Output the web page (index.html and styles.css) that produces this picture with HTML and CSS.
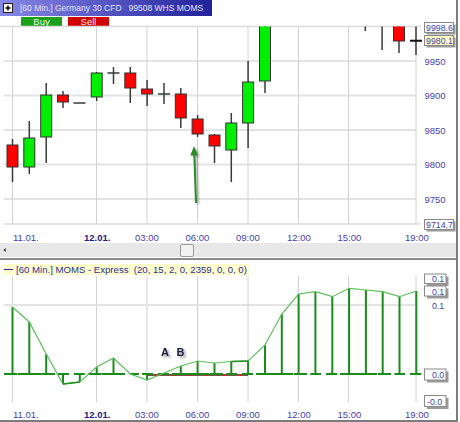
FILE: index.html
```html
<!DOCTYPE html>
<html>
<head>
<meta charset="utf-8">
<link rel="stylesheet" href="styles.css">
</head>
<body>
<div class="window">
  <div class="titlebar">
    <svg class="tb-icon" width="10" height="10" viewBox="0 0 10 10"><rect x="0.5" y="0.5" width="9" height="9" fill="#fff" stroke="#222"/><path d="M2.5 5H7.5M5 2.5V7.5" stroke="#000" stroke-width="1.4"/></svg>
    <span class="tb-text">[60 Min.] Germany 30 CFD</span>
    <span class="tb-text tb-code">99508 WHS MOMS</span>
  </div>
  <div class="toolbar">
    <span class="btn buy">Buy</span>
    <span class="btn sell">Sell</span>
  </div>
  <svg class="chart price" width="456" height="217" viewBox="0 26 456 217">
    <defs>
      <clipPath id="plotclip"><rect x="0" y="26.5" width="423" height="198"/></clipPath>
      <filter id="sh" x="-50%" y="-50%" width="200%" height="200%"><feDropShadow dx="2" dy="1.5" stdDeviation="1.2" flood-color="#000" flood-opacity="0.35"/></filter>
    </defs>
    <g class="grid-h">
      <path d="M4 61H416M4 95.5H416M4 130H416M4 164.5H416M4 199H416"/>
    </g>
    <g class="grid-v">
      <path d="M12.5 26.5V224M96.5 26.5V224M147 26.5V224M197.5 26.5V224M248 26.5V224M298.5 26.5V224M348.5 26.5V224M416 26.5V224"/>
    </g>
    <path class="frame" d="M0 26.5H421M4 224H421"/>
    <g clip-path="url(#plotclip)">
      <g class="wick">
        <path d="M12.5 139V182M29.3 121V174M46.2 83V163M63 91V108M73.5 103H85.5M96.7 72V101M107.5 73H119.5M113.5 67V84M130.3 67V103M147.1 80V106M158 94H170M164 83V104M180.8 88V128M197.6 115V137M214.5 134V163M231.3 113V182M248.1 61V148M265 20V93M365.3 20V31M382.1 20V50M399 20V53M416 20V55"/>
      </g>
      <path class="cross" d="M410 40.7H422"/>
      <g class="body up">
        <rect x="23.8" y="138" width="11" height="29"/>
        <rect x="40.7" y="95" width="11" height="42"/>
        <rect x="91.2" y="73" width="11" height="24"/>
        <rect x="225.8" y="123" width="11" height="27"/>
        <rect x="242.6" y="82" width="11" height="41"/>
        <rect x="259.5" y="20" width="11" height="61"/>
      </g>
      <g class="body down">
        <rect x="7" y="145" width="11" height="22"/>
        <rect x="57.5" y="95" width="11" height="7"/>
        <rect x="124.8" y="73" width="11" height="15"/>
        <rect x="141.6" y="89" width="11" height="5"/>
        <rect x="175.3" y="94" width="11" height="24"/>
        <rect x="192.1" y="119" width="11" height="15"/>
        <rect x="209" y="135" width="11" height="11"/>
        <rect x="393.5" y="20" width="11" height="21"/>
      </g>
    </g>
    <g class="arrow" filter="url(#sh)">
      <path d="M196 203L194.3 153" stroke="#2b8a2b" stroke-width="2"/>
      <path d="M190.3 155.5L194 146L198 155.5Z" fill="#2b8a2b"/>
    </g>
    <g class="ylab">
      <text x="424.5" y="64.5">9950</text>
      <text x="424.5" y="99">9900</text>
      <text x="424.5" y="133.5">9850</text>
      <text x="424.5" y="168">9800</text>
      <text x="424.5" y="202.5">9750</text>
    </g>
    <g class="tag">
      <rect class="tag-sh" x="426.5" y="24.5" width="29" height="10"/>
      <rect class="tag-bg" x="424.5" y="22.5" width="29" height="10"/>
      <text x="426" y="31">9998.6</text>
      <rect class="tag-sh" x="426.5" y="37.5" width="29" height="10"/>
      <rect class="tag-bg yellow" x="424.5" y="35.5" width="29" height="10"/>
      <text x="426" y="44">9980.1</text>
      <rect class="tag-sh" x="426.5" y="221.5" width="29" height="10"/>
      <rect class="tag-bg" x="424.5" y="219.5" width="29" height="10"/>
      <text x="426" y="228">9714.7</text>
    </g>
    <g class="xlab">
      <text x="13" y="240.5">11.01.</text>
      <text class="bold" x="84" y="240.5">12.01.</text>
      <text x="135" y="240.5">03:00</text>
      <text x="185.5" y="240.5">06:00</text>
      <text x="236" y="240.5">09:00</text>
      <text x="287" y="240.5">12:00</text>
      <text x="337.5" y="240.5">15:00</text>
      <text x="405" y="240.5">19:00</text>
    </g>
  </svg>
  <div class="scrollbar">
    <span class="sb-arrow"></span>
    <span class="sb-thumb"></span>
  </div>
  <div class="separator"></div>
  <div class="ind-header">
    <span class="legend"><span class="legend-line"></span>[60 Min.] MOMS - Express &nbsp;(20, 15, 2, 0, 2359, 0, 0, 0)</span>
  </div>
  <svg class="chart ind" width="456" height="144" viewBox="0 276 456 144">
    <defs>
      <filter id="tsh" x="-50%" y="-50%" width="200%" height="200%"><feDropShadow dx="2" dy="2" stdDeviation="1.3" flood-color="#000" flood-opacity="0.4"/></filter>
    </defs>
    <g class="grid-v">
      <path d="M12.5 276V402M96.5 276V402M147 276V402M197.5 276V402M248 276V402M298.5 276V402M348.5 276V402M416 276V402"/>
    </g>
    <g class="grid-h"><path d="M4 305H416"/></g>
    <path class="redbase" d="M147 375H248"/>
    <g class="reddots"><path d="M155 375H157M172 375H174M189 375H191M206 375H208M223 375H225M240 375H242"/></g>
    <path class="zero" d="M4 374H420"/>
    <g class="bars">
      <path d="M12.5 374V307M29.3 374V322M46.2 374V354M63 374V384M79.8 374V382M96.7 374V367M113.5 374V358M147.1 374V380M164 374V373M180.8 374V366M197.6 374V361M214.5 374V363M231.3 374V361.5M248.1 374V361M265 374V345M281.8 374V314M298.6 374V294M315.4 374V291.7M332.3 374V296.7M349.1 374V288.3M365.9 374V290M382.7 374V291.7M399.5 374V296.7M416.3 374V291"/>
    </g>
    <g class="ticks">
      <path d="M7.5 374H17.5M24.3 374H34.3M41.2 374H51.2M58 374H68M74.8 374H84.8M91.7 374H101.7M108.5 374H118.5M142.1 374H152.1M159 374H169M175.8 374H185.8M192.6 374H202.6M209.5 374H219.5M226.3 374H236.3M243.1 374H253.1M260 374H270M276.8 374H286.8M293.6 374H303.6M310.4 374H320.4M327.3 374H337.3M344.1 374H354.1M360.9 374H370.9M377.7 374H387.7M394.5 374H404.5M411.3 374H421.3"/>
    </g>
    <polyline class="mline" points="12.5,307 29.3,322 46.2,354 63,384 79.8,382 96.7,367 113.5,358 130.3,374 147.1,380 164,373 180.8,366 197.6,361 214.5,363 231.3,361.5 248.1,361 265,345 281.8,314 298.6,294 315.4,291.7 332.3,296.7 349.1,288.3 365.9,290 382.7,291.7 399.5,296.7 416.3,291"/>
    <path class="mdark" d="M63 384L79.8 382M231.3 361.5L248.1 361"/>
    <g class="ab" filter="url(#tsh)">
      <text x="161" y="355.7">A</text>
      <text x="176.5" y="355.7">B</text>
    </g>
    <g class="tag">
      <rect class="tag-sh" x="427" y="276.5" width="21.5" height="9.5"/>
      <rect class="tag-bg" x="424.5" y="274" width="21.5" height="9.5"/>
      <text x="432" y="282">0.1</text>
      <rect class="tag-sh" x="427" y="288.5" width="21.5" height="10"/>
      <rect class="tag-bg" x="424.5" y="286" width="21.5" height="10"/>
      <text x="432" y="294.5">0.1</text>
      <text x="432" y="308.5">0.1</text>
      <rect class="tag-sh" x="427" y="371.5" width="21.5" height="11"/>
      <rect class="tag-bg" x="424.5" y="369" width="21.5" height="11"/>
      <text x="432" y="378">0.0</text>
      <rect class="tag-sh" x="427" y="398" width="21.5" height="11"/>
      <rect class="tag-bg" x="424.5" y="395.5" width="21.5" height="11"/>
      <text x="427" y="404.5">-0.0</text>
    </g>
    <g class="xlab">
      <text x="13" y="417.5">11.01.</text>
      <text class="bold" x="84" y="417.5">12.01.</text>
      <text x="135" y="417.5">03:00</text>
      <text x="185.5" y="417.5">06:00</text>
      <text x="236" y="417.5">09:00</text>
      <text x="287" y="417.5">12:00</text>
      <text x="337.5" y="417.5">15:00</text>
      <text x="405" y="417.5">19:00</text>
    </g>
  </svg>
</div>
</body>
</html>
```
FILE: styles.css
```css
html, body {
  margin: 0;
  padding: 0;
  background: #ffffff;
}
body {
  width: 460px;
  height: 422px;
  overflow: hidden;
  font-family: "Liberation Sans", Arial, sans-serif;
}
.window {
  width: 456px;
  height: 420px;
  border-right: 2px solid #7c7c7c;
  border-bottom: 2px solid #7c7c7c;
  background: #ffffff;
  display: flex;
  flex-direction: column;
}
.titlebar {
  align-self: flex-start;
  min-width: 212px;
  height: 16px;
  box-sizing: border-box;
  padding: 0 1px 0 3px;
  display: flex;
  align-items: center;
  gap: 7px;
  background: linear-gradient(to right, #8787e6 0%, #5b5bc8 45%, #22229a 100%);
  flex: none;
}
.tb-icon {
  display: block;
  flex: none;
}
.tb-text {
  color: #e4e4ff;
  font-size: 8.5px;
  white-space: nowrap;
}
.tb-code {
  margin-left: 0;
}
.toolbar {
  height: 10px;
  box-sizing: border-box;
  padding: 1px 0 0 21px;
  display: flex;
  gap: 6px;
  flex: none;
}
.btn {
  width: 41px;
  height: 9px;
  display: flex;
  align-items: center;
  justify-content: center;
  font-size: 9.5px;
  line-height: 9px;
}
.buy {
  background: #1aa01a;
  color: #e6ffe6;
}
.sell {
  background: #d00000;
  color: #ffe6e6;
}
.chart {
  display: block;
  flex: none;
  overflow: visible;
}
.grid-h path {
  stroke: #e3e3e3;
  stroke-width: 2;
  fill: none;
}
.grid-v path {
  stroke: #d2d2d2;
  stroke-width: 1;
  fill: none;
}
.frame {
  stroke: #dcdcdc;
  stroke-width: 1.5;
  fill: none;
}
.wick path {
  stroke: #3a3a3a;
  stroke-width: 1.5;
  fill: none;
}
.cross {
  stroke: #111;
  stroke-width: 2;
}
.body rect {
  stroke: #333;
  stroke-width: 1;
}
.body.up rect {
  fill: #00ee00;
}
.body.down rect {
  fill: #ff0000;
}
.ylab text,
.tag text,
.xlab text {
  font-family: "Liberation Sans", Arial, sans-serif;
  font-size: 9.5px;
  fill: #4343b4;
}
.tag text {
  font-size: 8.8px;
}
.xlab text.bold {
  font-weight: bold;
  fill: #20207e;
}
.tag-bg {
  fill: #ffffff;
  stroke: #8a8a8a;
  stroke-width: 1;
}
.tag-bg.yellow {
  fill: #ffffc4;
}
.tag-sh {
  fill: #9a9a9a;
}
.scrollbar {
  height: 14px;
  background: #e8e8e8;
  display: flex;
  align-items: center;
  padding-left: 3px;
  flex: none;
}
.sb-arrow {
  width: 0;
  height: 0;
  border-top: 2.5px solid transparent;
  border-bottom: 2.5px solid transparent;
  border-right: 3px solid #555;
}
.sb-thumb {
  margin-left: 174px;
  width: 12px;
  height: 11px;
  background: #f2f2f2;
  border: 1px solid #9c9c9c;
  border-radius: 2px;
}
.separator {
  margin-top: 1px;
  height: 2px;
  background: #8c8c8c;
  flex: none;
}
.ind-header {
  height: 16px;
  box-sizing: border-box;
  padding: 4px 0 0 3px;
  flex: none;
  display: flex;
}
.legend {
  display: flex;
  align-items: center;
  height: 11px;
  padding: 0 3px 0 1px;
  background: #ffffcc;
  color: #2b2ba0;
  font-size: 9.6px;
  white-space: nowrap;
}
.legend-line {
  width: 9px;
  height: 1px;
  background: #2b2ba0;
  margin-right: 3px;
}
.zero {
  stroke: #1b8c1b;
  stroke-width: 2;
  stroke-dasharray: 9 5;
  fill: none;
}
.bars path,
.ticks path {
  stroke: #1b8c1b;
  stroke-width: 2;
  fill: none;
}
.mline {
  stroke: #5cbf5c;
  stroke-width: 1.2;
  fill: none;
}
.mdark {
  stroke: #1b8c1b;
  stroke-width: 1.5;
  fill: none;
}
.redbase {
  stroke: #5a1414;
  stroke-width: 1.5;
  fill: none;
}
.reddots path {
  stroke: #e01818;
  stroke-width: 2;
}
.ab text {
  font-family: "Liberation Sans", Arial, sans-serif;
  font-weight: bold;
  font-size: 11px;
  fill: #1c1c3c;
}
```
